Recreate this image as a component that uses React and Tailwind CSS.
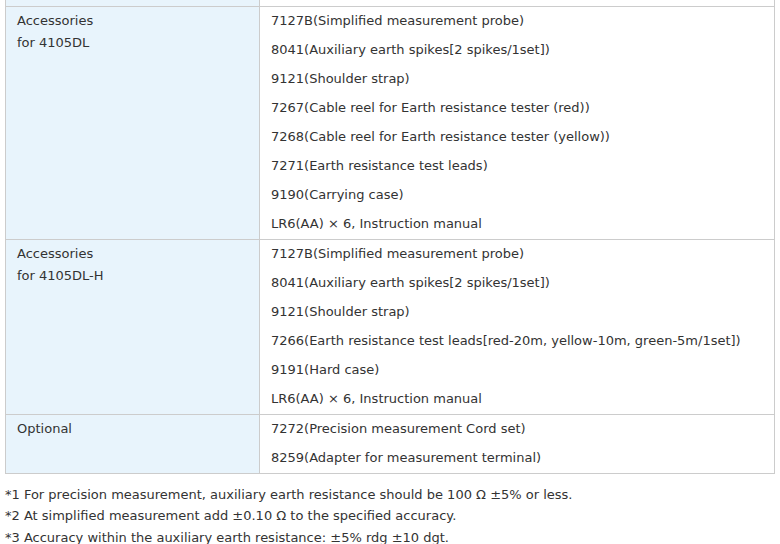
import React from 'react';

const rows = [
  {
    label: ['Accessories', 'for 4105DL'],
    items: [
      '7127B(Simplified measurement probe)',
      '8041(Auxiliary earth spikes[2 spikes/1set])',
      '9121(Shoulder strap)',
      '7267(Cable reel for Earth resistance tester (red))',
      '7268(Cable reel for Earth resistance tester (yellow))',
      '7271(Earth resistance test leads)',
      '9190(Carrying case)',
      'LR6(AA) × 6, Instruction manual',
    ],
  },
  {
    label: ['Accessories', 'for 4105DL-H'],
    items: [
      '7127B(Simplified measurement probe)',
      '8041(Auxiliary earth spikes[2 spikes/1set])',
      '9121(Shoulder strap)',
      '7266(Earth resistance test leads[red-20m, yellow-10m, green-5m/1set])',
      '9191(Hard case)',
      'LR6(AA) × 6, Instruction manual',
    ],
  },
  {
    label: ['Optional'],
    items: [
      '7272(Precision measurement Cord set)',
      '8259(Adapter for measurement terminal)',
    ],
  },
];

const notes = [
  '*1 For precision measurement, auxiliary earth resistance should be 100 Ω ±5% or less.',
  '*2 At simplified measurement add ±0.10 Ω to the specified accuracy.',
  '*3 Accuracy within the auxiliary earth resistance: ±5% rdg ±10 dgt.',
];

export default function App() {
  return (
    <div
      className="w-[780px] h-[544px] overflow-hidden bg-white text-[#333] text-[13px]"
      style={{ fontFamily: '"DejaVu Sans", Verdana, sans-serif' }}
    >
      <div className="pl-[5px] pr-[5px]">
        <table className="w-[770px] border-collapse">
          <tbody>
            {/* tail of the row above, scrolled off */}
            <tr className="h-[6px]">
              <td className="w-[254px] bg-[#e8f4fc] border-x border-b border-[#ccc] p-0" />
              <td className="border-x border-b border-[#ccc] p-0" />
            </tr>
            {rows.map((row, i) => (
              <tr key={i}>
                <td className="w-[254px] bg-[#e8f4fc] border border-[#ccc] align-top pl-[11px] pt-[3px] leading-[22px]">
                  {row.label.map((l) => (
                    <div key={l}>{l}</div>
                  ))}
                </td>
                <td className="border border-[#ccc] align-top pl-[11px] p-0">
                  {row.items.map((it, j) => (
                    <div key={j} className="h-[29px] flex items-center">
                      {it}
                    </div>
                  ))}
                </td>
              </tr>
            ))}
          </tbody>
        </table>
        <div className="mt-[10px] leading-[21.5px]">
          {notes.map((n) => (
            <div key={n}>{n}</div>
          ))}
        </div>
      </div>
    </div>
  );
}
